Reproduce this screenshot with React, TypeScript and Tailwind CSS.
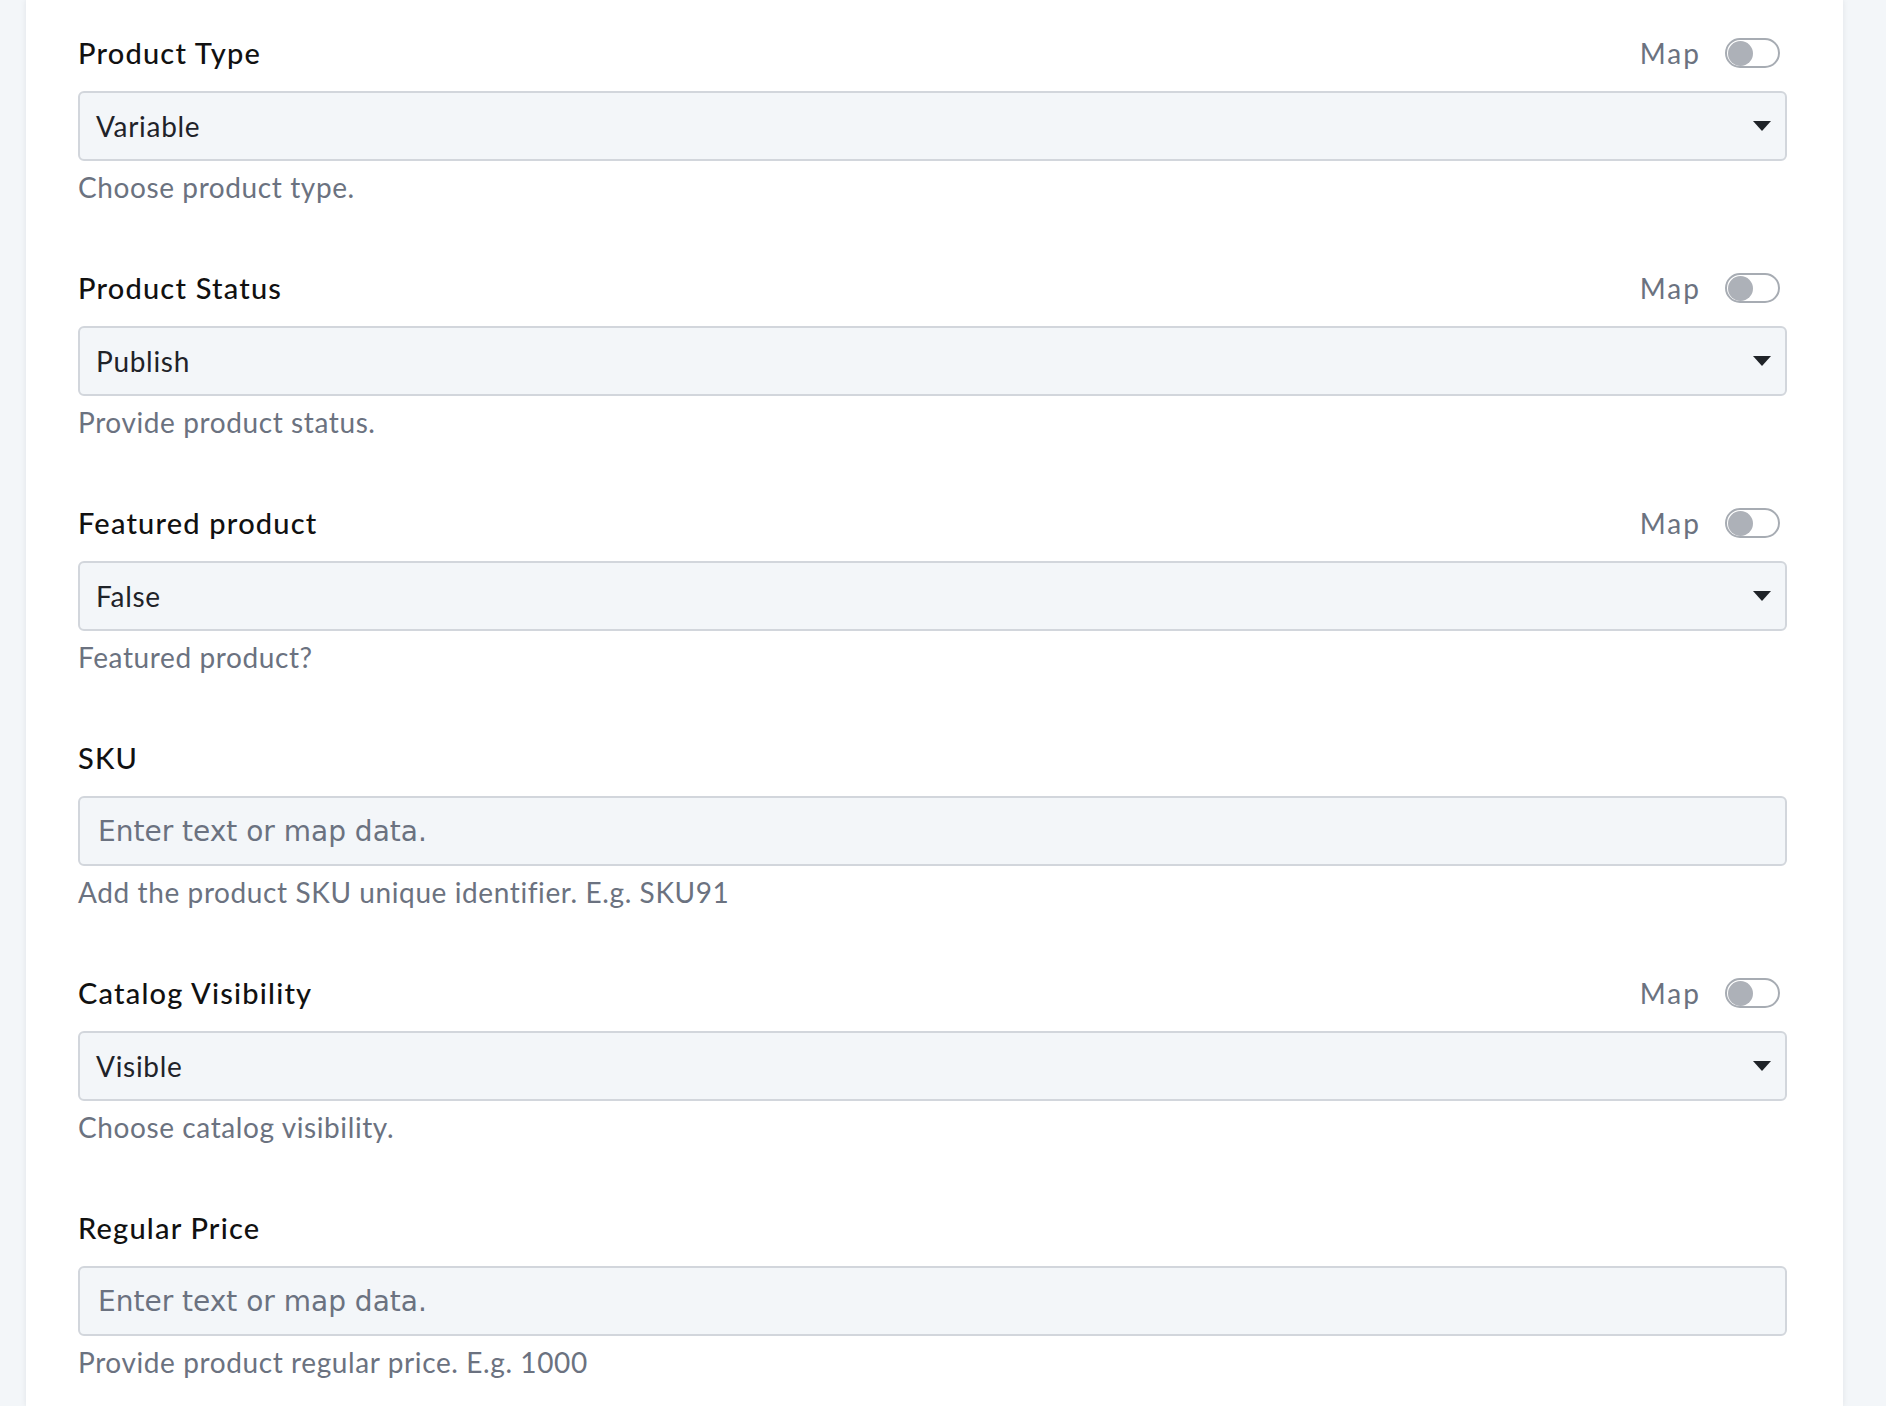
import React from "react";

type Field = {
  label: string;
  kind: "select" | "text";
  value?: string;
  help: string;
  map?: boolean;
};

const fields: Field[] = [
  { label: "Product Type", kind: "select", value: "Variable", help: "Choose product type.", map: true },
  { label: "Product Status", kind: "select", value: "Publish", help: "Provide product status.", map: true },
  { label: "Featured product", kind: "select", value: "False", help: "Featured product?", map: true },
  { label: "SKU", kind: "text", help: "Add the product SKU unique identifier. E.g. SKU91" },
  { label: "Catalog Visibility", kind: "select", value: "Visible", help: "Choose catalog visibility.", map: true },
  { label: "Regular Price", kind: "text", help: "Provide product regular price. E.g. 1000" },
];

function MapToggle() {
  return (
    <div className="flex items-center gap-[24px] mr-[7px]">
      <span className="text-[28px] leading-[40px] tracking-[2px] text-[#6b7280]">Map</span>
      <button
        type="button"
        className="w-[55px] h-[30px] rounded-full border-2 border-[#a7acb3] bg-white flex items-center px-[1px]"
      >
        <span className="w-[25px] h-[25px] rounded-full bg-[#adb1b8]" />
      </button>
    </div>
  );
}

function FieldRow({ field }: { field: Field }) {
  return (
    <div className="mb-[61px]">
      <div className="flex items-center justify-between h-[40px]">
        <span className="text-[29px] leading-[38px] tracking-[1.2px] font-medium text-[#111111]">
          {field.label}
        </span>
        {field.map && <MapToggle />}
      </div>

      {field.kind === "select" ? (
        <div className="mt-[18px] h-[70px] rounded-[6px] border-2 border-[#d2d6dc] bg-[#f3f6f9] flex items-center justify-between pl-[16px] pr-[14px]">
          <span className="text-[28px] tracking-[0.7px] text-[#1f2329]">{field.value}</span>
          <svg width="18" height="10" viewBox="0 0 18 10" className="text-[#1f2328]">
            <path d="M0 0h18L9 10z" fill="currentColor" />
          </svg>
        </div>
      ) : (
        <input
          readOnly
          placeholder="Enter text or map data."
          className="mt-[18px] block w-full h-[70px] rounded-[6px] border-2 border-[#d2d6dc] bg-[#f3f6f9] px-[18px] text-[28px] font-['DejaVu_Sans',Verdana,sans-serif] placeholder:text-[#6b7280] outline-none"
        />
      )}

      <p className="mt-[6px] text-[28px] leading-[40px] tracking-[0.6px] text-[#6b7280]">{field.help}</p>
    </div>
  );
}

export default function App() {
  return (
    <div className="min-h-screen bg-[#f3f6f9] pl-[26px] pr-[43px] font-['Lato','Noto_Sans',sans-serif]">
      <div className="bg-white min-h-screen shadow-[0_0_6px_rgba(15,23,42,0.08)] pl-[52px] pr-[56px] pt-[33px]">
        {fields.map((f) => (
          <FieldRow key={f.label} field={f} />
        ))}
      </div>
    </div>
  );
}
